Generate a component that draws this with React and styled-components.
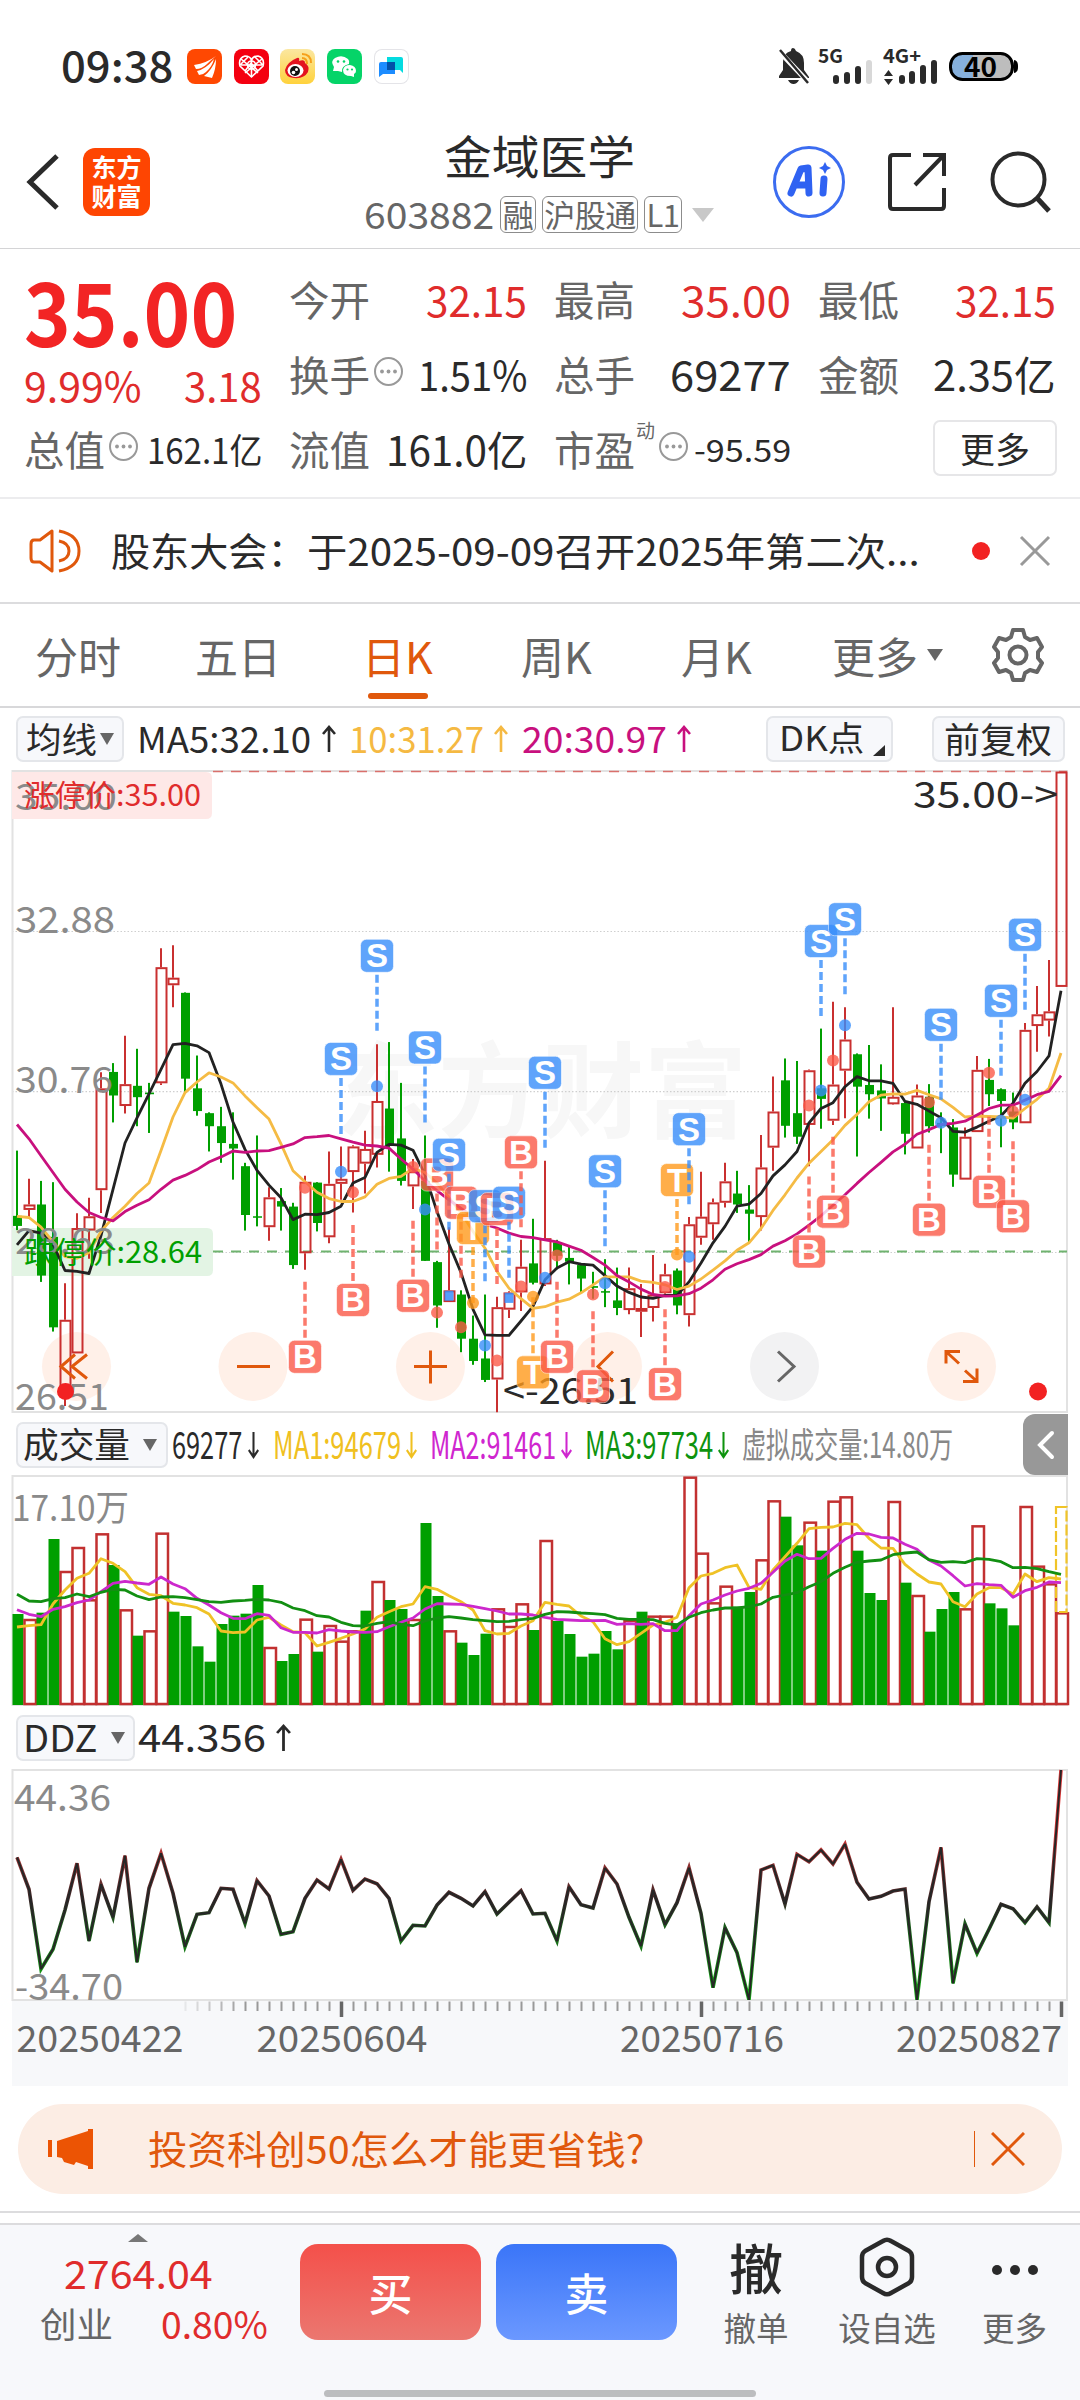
import React, { useLayoutEffect, useRef, useState } from "react";
import styled, { createGlobalStyle, css } from "styled-components";

const RED = "#e02c2c";
const GREEN = "#009f00";
const ORANGE = "#e0580c";
const DARK = "#2a2a2a";
const GREY = "#666";
const FONT = '"Noto Sans CJK SC", "Noto Sans", sans-serif';

const GlobalStyle = createGlobalStyle`
   * {
      box-sizing: border-box;
   }
   body {
      margin: 0;
      background: #fff;
      color: ${DARK};
      font-family: ${FONT};
   }
   svg {
      display: block;
      flex: none;
   }
`;

/* ---------- data ---------- */

// direction, high, body top, body bottom, low (axis units, AXIS_TOP..AXIS_BOTTOM)
const AXIS_TOP = 27;
const AXIS_BOTTOM = 1548;
const candles = `
g 928 1083 1107 1117|r 995 1056 1069 1090|g 1000 1056 1225 1240|g 1003 1133 1348 1358|r 1243 1330 1500 1535
r 1077 1112 1410 1410|r 1040 1084 1118 1185|r 742 780 1022 1076|g 720 741 797 861|r 655 770 822 840
g 686 774 801 870|g 767 790 794 886|r 447 492 768 772|r 440 517 535 587|g 552 553 757 790
g 702 780 834 845|g 837 839 870 930|g 824 870 910 957|g 837 912 923 997|g 957 965 1081 1118
g 892 1084 1087 1108|r 1015 1039 1110 1142|g 1017 1048 1061 1118|g 1052 1061 1200 1209|r 988 1002 1172 1211
g 1003 1004 1100 1120|r 930 1007 1134 1148|r 918 995 1007 1045|r 915 918 979 1075|r 881 924 959 1030
r 675 810 938 968|g 670 828 915 978|g 767 899 1000 1011|r 948 977 1013 1067|g 892 1000 1190 1190
g 1190 1193 1296 1349|r 1110 1260 1288 1288|g 1260 1270 1375 1407|g 1320 1375 1428 1437|g 1270 1422 1473 1478
r 1275 1300 1472 1550|r 1262 1265 1306 1326|r 1140 1204 1265 1309|g 1090 1196 1242 1246|r 952 1136 1246 1250
g 1140 1146 1178 1210|g 1155 1183 1192 1246|g 1195 1200 1232 1264|g 1216 1250 1254 1280|g 1186 1262 1264 1300
g 1206 1284 1302 1319|r 1206 1255 1307 1317|r 1245 1302 1311 1371|r 1176 1270 1302 1334|r 1197 1222 1267 1270
g 1208 1213 1296 1317|r 1086 1103 1319 1346|r 978 1085 1135 1152|r 1042 1051 1103 1140|r 957 1001 1052 1063
g 976 1030 1056 1076|g 1010 1068 1078 1150|r 891 968 1086 1118|r 752 835 921 976|g 709 761 869 897
g 715 839 895 912|r 735 737 867 965|g 638 780 805 876|r 574 771 857 867|r 587 664 738 851
g 697 699 776 942|g 677 772 794 852|g 723 785 804 881|r 587 800 818 819|g 812 815 888 937
r 771 797 923 923|g 770 800 870 885|g 837 862 870 934|g 853 873 985 1014|r 873 895 997 997
r 703 736 884 884|g 710 760 794 822|g 780 782 810 920|g 790 835 861 877|r 625 641 863 863
r 537 604 632 693|r 475 597 619 657|r 27 27 539 539`
   .trim()
   .split(/[|\n]/)
   .map((row) => {
      const [dir, ...v] = row.split(" ");
      return [dir, ...v.map(Number)];
   });

const ma5 = [1152,1118,1124,1150,1213,1215,1220,1130,1020,910,850,793,735,676,673,679,695,770,860,925,975,1010,1040,1092,1079,1080,1075,1060,1005,992,932,913,915,927,985,1073,1150,1218,1305,1366,1367,1367,1333,1298,1235,1207,1192,1198,1200,1225,1250,1265,1276,1279,1272,1272,1240,1195,1147,1108,1060,1055,1030,988,962,930,862,828,814,776,752,762,762,768,811,818,834,850,882,884,872,858,845,815,768,740,703,548];
const ma10 = [1084,1087,1110,1145,1180,1184,1170,1120,1087,1060,1030,1005,928,848,790,765,743,753,767,798,826,853,912,976,1002,1027,1042,1049,1049,1038,1008,994,989,970,980,1005,1040,1075,1120,1160,1215,1255,1280,1303,1299,1288,1281,1266,1247,1228,1228,1228,1238,1241,1247,1258,1250,1233,1212,1190,1165,1147,1113,1070,1033,993,958,930,902,868,842,812,796,793,794,785,795,805,825,848,846,847,848,851,828,806,780,696];
const ma20 = [866,900,940,980,1020,1050,1075,1087,1095,1073,1058,1045,1020,998,987,973,955,943,929,932,929,928,920,912,897,895,892,900,908,915,917,922,948,972,1000,1023,1045,1065,1085,1103,1112,1124,1132,1135,1140,1145,1155,1165,1182,1200,1225,1240,1257,1270,1274,1273,1268,1255,1235,1210,1197,1187,1175,1155,1142,1126,1105,1083,1058,1033,1006,980,956,931,913,889,878,866,863,858,843,828,820,820,808,795,787,750];

// letter, day, level, side the dashed leader leaves from
const flags = [
   ["S", 27, 710, 1], ["S", 30, 465, 1], ["S", 34, 683, 1], ["B", 35, 985, 1], ["S", 36, 938, 1],
   ["B", 24, 1418, -1], ["B", 28, 1283, -1], ["B", 33, 1273, -1], ["B", 37, 1052, 1], ["T", 38, 1112, 1],
   ["S", 39, 1060, 1], ["B", 40, 1067, 1], ["S", 41, 1052, 1], ["B", 42, 932, 1], ["T", 43, 1455, -1],
   ["S", 44, 743, 1], ["B", 45, 1418, -1], ["B", 48, 1488, -1], ["S", 49, 977, 1], ["B", 54, 1483, -1],
   ["T", 55, 998, 1], ["S", 56, 877, 1], ["B", 66, 1168, -1], ["B", 68, 1073, -1], ["S", 67, 430, 1],
   ["S", 69, 378, 1], ["B", 76, 1092, -1], ["S", 77, 629, 1], ["B", 81, 1026, -1], ["S", 82, 572, 1],
   ["B", 83, 1084, -1], ["S", 84, 415, 1],
];
const flagColor = { S: "#388efb", B: "#fb5a48", T: "#ff9a1c" };

const dots = [
   ["B", 24, 1016], ["S", 27, 978], ["B", 28, 1027], ["S", 30, 775], ["B", 33, 967], ["S", 34, 1068],
   ["B", 35, 1313], ["S", 36, 1273, true], ["B", 37, 1348], ["T", 38, 1290], ["S", 39, 1391], ["B", 40, 1427],
   ["S", 41, 1278, true], ["B", 42, 1251], ["T", 43, 1275], ["S", 44, 1230], ["B", 45, 1177], ["B", 48, 1270],
   ["S", 49, 1243], ["B", 54, 1252], ["T", 55, 1175], ["S", 56, 1180], ["B", 66, 821], ["S", 67, 785],
   ["B", 68, 714], ["S", 69, 630], ["B", 76, 813], ["S", 77, 862], ["B", 81, 743], ["S", 82, 857],
   ["B", 83, 835], ["S", 84, 807],
];

const volumes = "g612 r627 g608 g387 r483 r411 r568 r370 g465 r598 g677 r661 r368 g605 g618 g709 g755 g642 g617 g611 g525 r711 g753 g732 r626 g725 r645 r692 r661 g602 r513 g570 g597 r627 g339 g558 r661 g698 g735 g671 r595 r648 r580 g660 r390 g633 g672 g740 g731 g663 g718 r630 g605 r617 r617 g640 r200 r428 r577 r527 g590 g546 r448 r271 g320 g406 r335 g422 r272 r259 g422 g549 g570 r273 g518 r555 g665 g597 g546 r595 r346 g580 g595 g646 r288 r467 r520 r607".split(" ");
const vma1 = [651,647,644,582,540,505,490,446,460,485,533,553,557,580,585,593,612,663,668,666,630,622,645,665,668,708,697,685,672,657,622,605,590,582,530,538,557,575,600,662,672,670,648,632,577,583,588,618,635,686,704,695,670,645,637,622,533,498,490,473,465,532,538,480,440,400,356,352,351,340,344,385,414,415,463,492,516,522,575,590,552,533,533,552,492,515,503,507];
const vma2 = [599,613,620,598,590,578,570,545,520,514,519,523,501,522,536,565,585,608,625,626,611,616,653,667,667,669,659,663,666,667,665,650,637,624,597,581,582,583,589,596,603,612,612,615,622,628,630,632,632,631,643,641,643,641,662,662,617,582,570,555,543,535,520,487,453,433,446,445,415,388,370,372,382,384,403,418,450,468,497,528,521,524,526,562,542,532,516,518];
const vma3 = [553,573,575,566,563,552,560,547,538,540,558,569,561,560,563,569,575,577,573,571,568,570,577,594,602,617,621,637,647,648,640,635,643,647,633,624,620,624,629,632,635,634,629,625,613,605,606,609,611,614,625,628,628,629,640,645,622,608,600,594,594,590,582,562,555,548,530,515,490,472,457,453,450,434,429,426,449,457,455,458,446,448,455,473,472,476,485,493];

const ddz = [292,388,627,568,450,310,543,373,472,287,607,385,280,400,560,463,458,385,388,490,362,408,523,515,415,360,387,298,391,357,371,415,543,496,498,435,397,415,438,395,462,427,392,462,460,543,380,434,444,324,372,472,558,390,494,428,323,460,683,503,578,720,330,316,432,283,305,270,312,252,367,417,409,393,387,720,425,262,670,492,580,508,433,446,488,441,488,30];

const dayX = (i) => 17 + i * 12;
const priceY = (v) => 1.5 + ((v - AXIS_TOP) * 640) / (AXIS_BOTTOM - AXIS_TOP);
const volumeY = (v) => (v - 198) / 3 + 1;
const ddzY = (v) => (v - 30) / 3 + 1;
const toPoints = (values, y) => values.map((v, i) => `${dayX(i)},${y(v).toFixed(1)}`).join(" ");

/* ---------- shared pieces ---------- */

const FitBox = styled.span`
   display: inline-block;
   flex: none;
   white-space: nowrap;
   padding-bottom: 3px;
   font-size: ${(p) => p.$size}px;
   line-height: ${(p) => p.$size * 1.2}px;
   font-weight: ${(p) => p.$weight || 400};
   color: ${(p) => p.$color || "inherit"};
   margin-left: ${(p) => p.$gap || 0}px;
`;

const FitInner = styled.span`
   display: inline-block;
   transform-origin: left center;
`;

// one line of text squeezed or stretched to a fixed width
const Fit = ({ w, size, weight, color, gap, children }) => {
   const ref = useRef(null);
   const [scale, setScale] = useState(1);

   useLayoutEffect(() => {
      setScale(w / ref.current.offsetWidth);
   }, [w, children]);

   return (
      <FitBox $size={size} $weight={weight} $color={color} $gap={gap} style={{ width: w }}>
         <FitInner ref={ref} style={{ transform: `scaleX(${scale})` }}>
            {children}
         </FitInner>
      </FitBox>
   );
};

const Caret = styled.i`
   flex: none;
   width: 0;
   height: 0;
   margin-left: ${(p) => p.$gap || 0}px;
   border-left: ${(p) => p.$w / 2}px solid transparent;
   border-right: ${(p) => p.$w / 2}px solid transparent;
   ${(p) =>
      p.$up
         ? css`border-bottom: ${p.$h}px solid ${p.$color || GREY};`
         : css`border-top: ${p.$h}px solid ${p.$color || GREY};`}
`;

const Page = styled.div`
   width: 1080px;
   height: 2400px;
   display: flex;
   flex-direction: column;
   overflow: hidden;
   background: #fff;
`;

/* ---------- status bar ---------- */

const StatusRow = styled.div`
   height: 116px;
   padding: 16px 61px 0 61px;
   display: flex;
   align-items: center;
   justify-content: space-between;
`;

const StatusGroup = styled.div`
   display: flex;
   align-items: center;
`;

const AppIcons = styled.div`
   display: flex;
   gap: 11.7px;
   margin-left: 14px;
`;

const AppIcon = styled.div`
   width: 35px;
   height: 35px;
   border-radius: 8px;
   background: ${(p) => p.$bg};
   box-shadow: ${(p) => (p.$line ? "inset 0 0 0 1px #e4e4e8" : "none")};
`;

const StatusBar = () => (
   <StatusRow>
      <StatusGroup>
         <Fit w={112} size={42} weight={500}>09:38</Fit>
         <AppIcons>
            <AppIcon $bg="#ff4802">
               <svg width="35" height="35" viewBox="0 0 35 35" fill="#fff">
                  <path d="M7 16 Q20 14 29 7 Q24 11 20 15 Q15 20 9 20Z" />
                  <path d="M10 22 Q19 20 27 10 Q25 18 19 23 Q16 26 12 26Z" />
                  <path d="M17 27 Q25 21 29 10 Q29 20 25 29Z" />
               </svg>
            </AppIcon>
            <AppIcon $bg="#f40010">
               <svg width="35" height="35" viewBox="0 0 35 35" fill="none" stroke="#fff" strokeWidth="1.6">
                  <path d="M17.5 28 L6 17 Q4 9 11 7 Q16 7 17.5 11 Q19 7 24 7 Q31 9 29 17Z" />
                  <path d="M7 10 L24 24 M28 10 L11 24 M6 16 L14 8 M29 16 L21 8 M11 22 L17 14 L24 22 M17.5 10 V28 M7 16 H28" />
                  <circle cx="17.5" cy="16" r="4" />
               </svg>
            </AppIcon>
            <AppIcon $bg="linear-gradient(#fbe7a0, #ffd23c)">
               <svg width="35" height="35" viewBox="0 0 35 35">
                  <path d="M17 9 Q20 8 19 12 Q25 10 25 14 Q30 17 28 23 Q24 30 14 29 Q5 28 5 21 Q7 13 17 9Z" fill="#e3131f" />
                  <ellipse cx="15.500" cy="21.500" rx="8" ry="6.500" fill="#fff" />
                  <circle cx="15" cy="22" r="5" fill="#111" />
                  <circle cx="16.500" cy="20.500" r="1.500" fill="#fff" />
                  <circle cx="13.500" cy="23.500" r="1.800" fill="#fff" />
                  <path d="M22 9 Q27 9 27 15 M22 5 Q31 5 31 14" fill="none" stroke="#f6a01a" strokeWidth="2" />
               </svg>
            </AppIcon>
            <AppIcon $bg="#05d468">
               <svg width="35" height="35" viewBox="0 0 35 35">
                  <path d="M6 22 L7 18 Q3 12 8 9 Q15 5 21 10 Q23 12 22 15 Q14 17 15 23 L11 22Z" fill="#fff" />
                  <path d="M16 21 Q17 16 23 16 Q29 17 29 22 Q29 24 27 25 L27 28 L24 27 Q16 27 16 21Z" fill="#fff" />
                  <g fill="#05d468">
                     <circle cx="11" cy="12.500" r="1.300" />
                     <circle cx="17" cy="12.500" r="1.300" />
                     <circle cx="20.500" cy="20.500" r="1.100" />
                     <circle cx="25" cy="20.500" r="1.100" />
                  </g>
               </svg>
            </AppIcon>
            <AppIcon $bg="#fff" $line>
               <svg width="35" height="35" viewBox="0 0 35 35">
                  <path d="M13 8 H27 Q29 8 29 10 V24 L26 21 H13Z" fill="#04dbe0" />
                  <path d="M7 13 H21 V25 H9 L5 28 V15 Q5 13 7 13Z" fill="#1c8cff" />
                  <path d="M13 13 H21 V21 H13Z" fill="#0251a8" />
               </svg>
            </AppIcon>
         </AppIcons>
      </StatusGroup>
      <svg width="242" height="44" viewBox="777 45 242 44" fill={DARK}>
         <path d="M793 49 Q795 49 796 52 Q804 55 804 64 V71 L809 78 V79 H779 V77 L783 71 V63 Q783 54 791 52 Q791 49 793 49Z M788 81 H799 Q797 85 793.500 85 Q790 85 788 81Z" />
         <path d="M777 50 L811 86" stroke="#fff" strokeWidth="5" />
         <path d="M780 51 L808 84" stroke={DARK} strokeWidth="2.500" />
         <text x="818" y="63.500" fontSize="19" fontWeight="700" textLength="25" lengthAdjust="spacingAndGlyphs">5G</text>
         <text x="883" y="63.500" fontSize="19" fontWeight="700" textLength="38" lengthAdjust="spacingAndGlyphs">4G+</text>
         <g strokeWidth="6" strokeLinecap="round" stroke={DARK}>
            <path d="M836 79 V82 M847 76 V82 M858 70 V82" />
            <path d="M869 64 V82" stroke="#d8d8d8" />
            <path d="M902 79 V82 M912 75 V82 M923 69 V82 M934 64 V82" />
         </g>
         <path d="M888.500 71 L893 77 H884Z M888.500 86 L893 80 H884Z" />
         <rect x="950.500" y="54.500" width="62" height="26" rx="12" fill="#bdbdbd" />
         <path d="M973 54.500 H963 Q950.500 55 950.500 67.500 Q950.500 80 963 80.500 H973Z" fill="#86b0dc" />
         <rect x="950.500" y="54.500" width="62" height="26" rx="12" fill="none" stroke="#000" strokeWidth="3" />
         <path d="M1014 61 Q1018 61 1018 67.500 Q1018 74 1014 74Z" fill="#000" />
         <text x="964" y="78" fontSize="27" fontWeight="700" fill="#000" textLength="33" lengthAdjust="spacingAndGlyphs">40</text>
      </svg>
   </StatusRow>
);

/* ---------- header ---------- */

const HeaderRow = styled.header`
   height: 133px;
   padding: 0 29px 0 26px;
   display: flex;
   align-items: center;
   border-bottom: 1px solid #d4d4d6;
`;

const Logo = styled.div`
   width: 67px;
   height: 68px;
   margin-left: 24px;
   border-radius: 12px;
   background: #fe4502;
   color: #fff;
   font-size: 25px;
   font-weight: 700;
   line-height: 29px;
   text-align: center;
   padding-top: 4px;
`;

const TitleBlock = styled.div`
   width: 354px;
   margin-left: 212px;
   padding-top: 3px;
   display: flex;
   flex-direction: column;
   align-items: center;
`;

const CodeRow = styled.div`
   height: 50px;
   margin-top: 4px;
   display: flex;
   align-items: center;
   color: ${GREY};
`;

const Tag = styled.span`
   height: 37px;
   display: flex;
   align-items: center;
   justify-content: center;
   width: ${(p) => p.$w}px;
   margin-left: 6px;
   border: 1.5px solid #8c8c8c;
   border-radius: 6px;
   font-size: 31px;
   line-height: 33px;
   padding-bottom: 2px;
   letter-spacing: -0.5px;
`;

const HeaderIcons = styled.div`
   display: flex;
   align-items: center;
   margin-left: auto;
`;

const Header = () => (
   <HeaderRow>
      <svg width="33" height="56" viewBox="0 0 33 56" fill="none" stroke={DARK} strokeWidth="5">
         <path d="M31 2 L4 28 L31 54" />
      </svg>
      <Logo>
         东方
         <br />
         财富
      </Logo>
      <TitleBlock>
         <Fit w={191} size={46}>金域医学</Fit>
         <CodeRow>
            <Fit w={130} size={37}>603882</Fit>
            <Tag $w={36}>融</Tag>
            <Tag $w={96}>沪股通</Tag>
            <Tag $w={38}>L1</Tag>
            <Caret $w={22} $h={14} $gap={10} $color="#c8c8c8" />
         </CodeRow>
      </TitleBlock>
      <HeaderIcons>
         <svg width="72" height="72" viewBox="0 0 72 72">
            <circle cx="36" cy="36" r="34.500" fill="none" stroke="#3b6cf0" strokeWidth="3" />
            <g fill="none" stroke="#2f62f2" strokeWidth="7" strokeLinejoin="round" strokeLinecap="round">
               <path d="M18 47 L28 23 L35 22 L36 47 M25 39 H35" />
               <path d="M51 33 L50 47" />
            </g>
            <path d="M52 16 L54 20 L58 22 L54 24 L52 28 L50 24 L46 22 L50 20Z" fill="#2f62f2" />
         </svg>
         <svg width="60" height="60" viewBox="0 0 60 60" fill="none" stroke={DARK} strokeWidth="4" style={{ marginLeft: 42 }}>
            <path d="M24 3 H6 Q3 3 3 6 V54 Q3 57 6 57 H54 Q57 57 57 54 V36" />
            <path d="M36 3 H57 V24 M56 4 L28 33" />
         </svg>
         <svg width="62" height="62" viewBox="0 0 62 62" fill="none" stroke={DARK} strokeWidth="4" style={{ marginLeft: 42 }}>
            <circle cx="29.500" cy="28.500" r="26" />
            <path d="M48 47 L60 60" strokeWidth="5" />
         </svg>
      </HeaderIcons>
   </HeaderRow>
);

/* ---------- quote ---------- */

const QuoteGrid = styled.section`
   height: 250px;
   padding: 14px 24px 9px 24px;
   display: grid;
   grid-template-columns: 238px 238px 237px 238px;
   grid-template-rows: 75px 75px 75px;
   column-gap: 27px;
   border-bottom: 2px solid #ececee;
`;

const Cell = styled.div`
   display: flex;
   align-items: center;
   justify-content: space-between;
   color: ${DARK};
`;

const Label = styled.span`
   display: flex;
   align-items: center;
   color: ${GREY};
   font-size: 40.5px;
   line-height: 48px;
   padding-bottom: 3px;
   sup {
      align-self: flex-start;
      height: 24px;
      font-size: 19px;
      line-height: 20px;
      margin-top: -5px;
      margin-left: 1px;
   }
`;

const PriceCell = styled.div`
   grid-row: span 2;
   display: flex;
   flex-direction: column;
   margin-top: -7px;
   color: ${RED};
`;

const Change = styled.div`
   display: flex;
   justify-content: space-between;
   align-items: center;
   height: 44px;
   margin-top: -1px;
`;

const MoreButton = styled.button`
   width: 124px;
   height: 56px;
   margin: 0 -1px 6px auto;
   border: 2px solid #e6e6e8;
   border-radius: 7px;
   background: #fff;
   color: ${DARK};
   font: 35px/48px ${FONT};
   padding: 0;
`;

const InfoDot = ({ gap = 3 }) => (
   <svg width="31" height="31" viewBox="0 0 31 31" style={{ marginLeft: gap, marginTop: -5 }}>
      <circle cx="15.500" cy="15.500" r="13.500" fill="none" stroke="#999" strokeWidth="2" />
      <g fill="#999">
         <circle cx="9" cy="15.500" r="1.900" />
         <circle cx="15.500" cy="15.500" r="1.900" />
         <circle cx="22" cy="15.500" r="1.900" />
      </g>
   </svg>
);

const Quote = () => (
   <QuoteGrid>
      <PriceCell>
         <Fit w={213} size={88} weight={700} color="#f22424">35.00</Fit>
         <Change>
            <Fit w={117} size={41}>9.99%</Fit>
            <Fit w={78} size={41}>3.18</Fit>
         </Change>
      </PriceCell>
      <Cell><Label>今开</Label><Fit w={101} size={42} color={RED}>32.15</Fit></Cell>
      <Cell><Label>最高</Label><Fit w={110} size={42} color={RED}>35.00</Fit></Cell>
      <Cell><Label>最低</Label><Fit w={101} size={42} color={RED}>32.15</Fit></Cell>
      <Cell><Label>换手<InfoDot /></Label><Fit w={109} size={41}>1.51%</Fit></Cell>
      <Cell><Label>总手</Label><Fit w={121} size={41}>69277</Fit></Cell>
      <Cell><Label>金额</Label><Fit w={123} size={41}>2.35亿</Fit></Cell>
      <Cell><Label>总值<InfoDot /></Label><Fit w={115} size={35}>162.1亿</Fit></Cell>
      <Cell><Label>流值</Label><Fit w={141} size={41}>161.0亿</Fit></Cell>
      <Cell><Label>市盈<sup>动</sup><InfoDot /></Label><Fit w={97} size={31}>-95.59</Fit></Cell>
      <Cell><MoreButton>更多</MoreButton></Cell>
   </QuoteGrid>
);

/* ---------- notice ---------- */

const NoticeRow = styled.div`
   height: 105px;
   padding: 0 28px;
   display: flex;
   align-items: center;
   border-bottom: 2px solid #dcdcde;
`;

const RedDot = styled.i`
   width: 18px;
   height: 18px;
   margin-left: 52px;
   border-radius: 50%;
   background: #f22222;
`;

const Notice = () => (
   <NoticeRow>
      <svg width="54" height="46" viewBox="0 0 54 46" fill="none" stroke={ORANGE} strokeWidth="3">
         <path d="M24 3 L12 12 H6 Q3 12 3 16 V30 Q3 34 6 34 H12 L24 43Z" strokeLinejoin="round" />
         <path d="M31 13 Q41 15 41 23 Q41 31 31 33 M31 3 Q51 7 51 23 Q51 39 31 43" />
      </svg>
      <Fit w={196} size={38.5} gap={29}>股东大会：</Fit>
      <Fit w={613} size={38.5}>于2025-09-09召开2025年第二次...</Fit>
      <RedDot />
      <svg width="32" height="32" viewBox="0 0 32 32" stroke="#999" strokeWidth="3" style={{ marginLeft: 29 }}>
         <path d="M2 2 L30 30 M30 2 L2 30" />
      </svg>
   </NoticeRow>
);

/* ---------- period tabs ---------- */

const TabRow = styled.nav`
   height: 104px;
   padding-left: 35px;
   display: flex;
   align-items: stretch;
   border-bottom: 2px solid #d8d8da;
`;

const Tab = styled.span`
   width: ${(p) => p.$w}px;
   display: flex;
   flex-direction: column;
   align-items: flex-start;
   justify-content: space-between;
   color: ${(p) => (p.$active ? ORANGE : GREY)};
   font-size: 43px;
   line-height: 54px;
   padding: 24px 0 7px;

   &::after {
      content: "";
      width: 60px;
      height: 6px;
      margin-left: 6px;
      border-radius: 3px;
      background: ${(p) => (p.$active ? ORANGE : "transparent")};
   }
`;

const TabLine = styled.span`
   display: flex;
   align-items: center;
`;

const Tabs = () => (
   <TabRow>
      <Tab $w={160}>分时</Tab>
      <Tab $w={167}>五日</Tab>
      <Tab $w={159} $active>日K</Tab>
      <Tab $w={160}>周K</Tab>
      <Tab $w={151}>月K</Tab>
      <Tab $w={158}><TabLine>更多<Caret $w={16} $h={12} $gap={9} /></TabLine></Tab>
      <svg width="56" height="56" viewBox="0 0 56 56" fill="none" stroke={GREY} strokeWidth="4" strokeLinejoin="round" style={{ marginTop: 23 }}>
         <path d="M23 3 H33 L35 10 L40 13 L47 11 L52 20 L48 25 V31 L52 36 L47 45 L40 43 L35 46 L33 53 H23 L21 46 L16 43 L9 45 L4 36 L8 31 V25 L4 20 L9 11 L16 13 L21 10Z" />
         <circle cx="28" cy="28" r="8.500" />
      </svg>
   </TabRow>
);

/* ---------- indicator rows ---------- */

const IndicatorRow = styled.div`
   height: ${(p) => p.$h}px;
   padding: 0 ${(p) => p.$right || 0}px 0 16px;
   display: flex;
   align-items: center;
   flex: none;
`;

const Pill = styled.span`
   width: ${(p) => p.$w}px;
   height: 46px;
   flex: none;
   display: flex;
   align-items: center;
   padding-left: ${(p) => p.$pad || 5}px;
   margin-left: ${(p) => p.$gap || 0}px;
   border: 2px solid #e4e6ea;
   border-radius: 7px;
   background: #f7f8fb;
`;

const Corner = styled.i`
   align-self: flex-end;
   margin: 0 0 4px 9px;
   border-left: 12px solid transparent;
   border-bottom: 11px solid ${DARK};
`;

const Drawer = styled.span`
   width: 45px;
   height: 61px;
   margin-left: auto;
   display: flex;
   align-items: center;
   justify-content: center;
   border-radius: 12px 0 0 12px;
   background: #989898;
`;

const Arrow = ({ up, gap, color = DARK, w = 14 }) => (
   <svg width={w} height="28" viewBox="0 0 14 28" preserveAspectRatio="none" fill="none" stroke={color} strokeWidth="2.600" style={{ marginLeft: gap }}>
      <path d={up ? "M7 27 V2 M1 9 L7 2 L13 9" : "M7 1 V26 M1 19 L7 26 L13 19"} />
   </svg>
);

const AverageRow = () => (
   <IndicatorRow $h={62}>
      <Pill $w={108} $pad={8}><Fit w={71} size={35}>均线</Fit><Caret $w={14} $h={12} $gap={3} /></Pill>
      <Fit w={174} size={36} gap={13}>MA5:32.10</Fit>
      <Arrow up gap={11} />
      <Fit w={135} size={36} gap={13} color="#f5b942">10:31.27</Fit>
      <Arrow up gap={10} color="#f5b942" />
      <Fit w={145} size={36} gap={14} color="#c8107e">20:30.97</Fit>
      <Arrow up gap={10} color="#c8107e" />
      <Pill $w={127} $pad={11} $gap={75}><Fit w={85} size={34}>DK点</Fit><Corner /></Pill>
      <Pill $w={133} $pad={10} $gap={39}><Fit w={108} size={35}>前复权</Fit></Pill>
   </IndicatorRow>
);

const VolumeRow = () => (
   <IndicatorRow $h={61} $right={12}>
      <Pill $w={152}><Fit w={107} size={35}>成交量</Fit><Caret $w={15} $h={12} $gap={13} /></Pill>
      <Fit w={70} size={38} gap={4}>69277</Fit>
      <Arrow gap={6} w={11} />
      <Fit w={128} size={38} gap={14} color="#f0c020">MA1:94679</Fit>
      <Arrow gap={5} w={11} color="#f0c020" />
      <Fit w={126} size={38} gap={13} color="#cf26cf">MA2:91461</Fit>
      <Arrow gap={5} w={11} color="#cf26cf" />
      <Fit w={128} size={38} gap={13} color="#0e930e">MA3:97734</Fit>
      <Arrow gap={5} w={11} color="#0e930e" />
      <Fit w={211} size={35} gap={13} color="#888">虚拟成交量:14.80万</Fit>
      <Drawer>
         <svg width="18" height="30" viewBox="0 0 18 30" fill="none" stroke="#fff" strokeWidth="4" strokeLinecap="round">
            <path d="M15 3 L3 15 L15 27" />
         </svg>
      </Drawer>
   </IndicatorRow>
);

const DdzRow = () => (
   <IndicatorRow $h={63}>
      <Pill $w={119}><Fit w={74} size={37}>DDZ</Fit><Caret $w={15} $h={12} $gap={14} /></Pill>
      <Fit w={128} size={38} gap={3}>44.356</Fit>
      <Arrow up gap={10} w={15} />
   </IndicatorRow>
);

/* ---------- charts ---------- */

const Frame = ({ h }) => <rect x="12.5" y="1" width="1054.500" height={h} fill="none" stroke="#e2e2e2" strokeWidth="2" />;

const ChartText = ({ x, y, w, size = 37, color = "#8a8a8a", weight, children }) => (
   <text x={x} y={y} fontSize={size} fill={color} fontWeight={weight} textLength={w} lengthAdjust="spacingAndGlyphs">
      {children}
   </text>
);

const Candle = ({ i, data: [dir, high, top, bottom, low] }) => {
   const x = dayX(i);
   const y1 = priceY(top);
   const h = Math.max(priceY(bottom) - y1, 1.5);
   if (dir === "g") {
      return (
         <g fill={GREEN}>
            <rect x={x - 1} y={priceY(high)} width="2" height={priceY(low) - priceY(high)} />
            <rect x={x - 4} y={y1} width="9" height={h} />
         </g>
      );
   }
   return (
      <g stroke="#c93030" strokeWidth="2" fill="none">
         <path d={`M${x} ${priceY(high)} V${y1} M${x} ${priceY(bottom)} V${priceY(low)}`} />
         <rect x={x - 4.5} y={y1 + 1} width="10" height={Math.max(h - 2, 1)} />
      </g>
   );
};

const Flag = ({ data: [letter, i, level, side] }) => {
   const x = dayX(i);
   const y = priceY(level);
   const color = flagColor[letter];
   return (
      <g opacity="0.8">
         <path d={`M${x} ${y + side * 19} V${y + side * 76}`} stroke={color} strokeWidth="3.500" strokeDasharray="8 4" />
         <rect x={x - 16.5} y={y - 16.5} width="33" height="33" rx="6" fill={color} stroke="#fff" strokeOpacity="0.6" />
         <text x={x} y={y + 11.5} fontSize="33" fontFamily="Liberation Sans, sans-serif" fontWeight="700" fill="#fff" textAnchor="middle">
            {letter}
         </text>
      </g>
   );
};

const tools = [
   [76.5, "M75 -12 L61 0 L75 12 M87 -12 L72 0 L87 12"],
   [253, "M237 0 H270"],
   [430.5, "M414 0 H447 M430.500 -16 V17"],
   [607.5, "M613 -15 L598 0 L613 15"],
   [784.5, "M778 -15 L794 0 L778 15"],
   [961.5, "M946 -3 V-15 H960 M946 -15 L959 -3 M977 2 V15 H963 M977 15 L965 4"],
];

const PriceChart = () => (
   <svg width="1080" height="644" viewBox="0 0 1080 644">
      <ChartText x={335} y={360} w={412} size={104} weight={700} color="#f7f7f7">东方财富</ChartText>
      <g stroke="#cfcfcf" strokeWidth="1.200" strokeDasharray="1.500 2">
         <path d="M12 161.500 H1067 M12 321.700 H1067 M12 482.500 H1067" />
      </g>
      <Frame h={641} />
      <path d="M213 1.500 H1067" stroke="#d9706c" strokeWidth="1.500" strokeDasharray="10 8" />
      <path d="M213 481.500 H1067" stroke="#6fb36f" strokeWidth="1.800" strokeDasharray="10 8" />
      <path d="M12 2 H206 Q212 2 212 8 V43 Q212 49 206 49 H12Z" fill="#fee8e7" />
      <path d="M12 458 H207 Q213 458 213 464 V500 Q213 506 207 506 H12Z" fill="#e3f4e4" />
      {tools.map(([cx]) => (
         <circle key={cx} cx={cx} cy="596.500" r="34.500" fill={cx === 784.5 ? "#f2f2f3" : "#fff0e8"} />
      ))}
      {candles.map((c, i) => (
         <Candle key={i} i={i} data={c} />
      ))}
      <g fill="none" strokeWidth="2.800" strokeLinejoin="round">
         <polyline points={toPoints(ma5, priceY)} stroke="#222" />
         <polyline points={toPoints(ma10, priceY)} stroke="#f5bb44" />
         <polyline points={toPoints(ma20, priceY)} stroke="#c8107e" />
      </g>
      <ChartText x={15} y={39.500} w={102}>35.00</ChartText>
      <ChartText x={15} y={162.500} w={100}>32.88</ChartText>
      <ChartText x={15} y={323} w={98}>30.76</ChartText>
      <ChartText x={15} y={483.500} w={100}>28.63</ChartText>
      <ChartText x={15} y={640} w={94}>26.51</ChartText>
      <ChartText x={24} y={36} w={177} size={30} color={RED}>涨停价:35.00</ChartText>
      <ChartText x={24} y={493} w={178} size={30} color={GREEN}>跌停价:28.64</ChartText>
      <ChartText x={913} y={38} w={145} color={DARK}>35.00-&gt;</ChartText>
      <ChartText x={503} y={634} w={135} color={DARK}>&lt;-26.51</ChartText>
      {tools.map(([cx, d]) => (
         <path key={cx} d={d} transform="translate(0 596.500)" fill="none" stroke={cx === 784.5 ? GREY : ORANGE} strokeWidth="3" />
      ))}
      {dots.map(([k, i, level, square]) =>
         square ? (
            <rect key={i} x={dayX(i) - 4.5} y={priceY(level) - 5} width="9" height="10" fill={flagColor[k]} opacity="0.85" />
         ) : (
            <circle key={i} cx={dayX(i)} cy={priceY(level)} r="6" fill={flagColor[k]} opacity="0.8" />
         )
      )}
      {flags.map((f) => (
         <Flag key={f[1]} data={f} />
      ))}
      <circle cx="65.500" cy="621.500" r="8.500" fill="#f22222" />
      <circle cx="1038" cy="621.500" r="9" fill="#f22222" />
   </svg>
);

const VolumeChart = () => (
   <svg width="1080" height="231" viewBox="0 0 1080 231">
      <Frame h={229} />
      {volumes.map((v, i) => {
         const y = volumeY(Number(v.slice(1)));
         const x = dayX(i) - 4.5;
         return v[0] === "g" ? (
            <rect key={i} x={x} y={y} width="11" height={230 - y} fill={GREEN} />
         ) : (
            <rect key={i} x={x} y={y + 1} width="11.5" height={228 - y} fill="#fff" stroke="#c23030" strokeWidth="2.500" />
         );
      })}
      <rect x="1056" y="32" width="10.500" height="105" fill="none" stroke="#f0c428" strokeWidth="2.200" strokeDasharray="11 3" />
      <g fill="none" strokeWidth="2.800" strokeLinejoin="round">
         <polyline points={toPoints(vma1, volumeY)} stroke="#efc226" />
         <polyline points={toPoints(vma2, volumeY)} stroke="#cc28cc" />
         <polyline points={toPoints(vma3, volumeY)} stroke="#128f12" />
      </g>
      <ChartText x={12} y={46} w={117} size={36}>17.10万</ChartText>
   </svg>
);

const DdzChart = () => (
   <svg width="1080" height="232" viewBox="0 0 1080 232">
      <defs>
         <linearGradient id="heat" gradientUnits="userSpaceOnUse" x1="0" y1="60" x2="0" y2="231">
            <stop offset="0" stopColor="#e03838" />
            <stop offset="0.42" stopColor="#3a2828" />
            <stop offset="0.55" stopColor="#1c5a1c" />
            <stop offset="1" stopColor="#11b011" />
         </linearGradient>
         <clipPath id="ddzArea">
            <rect x="12" y="0" width="1056" height="231" />
         </clipPath>
      </defs>
      <Frame h={230} />
      <ChartText x={14} y={42} w={97}>44.36</ChartText>
      <ChartText x={15} y={231} w={108}>-34.70</ChartText>
      <g fill="none" clipPath="url(#ddzArea)">
         <polyline points={toPoints(ddz, ddzY)} stroke="url(#heat)" strokeWidth="3.600" />
         <polyline points={toPoints(ddz, ddzY)} stroke="#262626" strokeWidth="2" strokeLinejoin="bevel" />
      </g>
   </svg>
);

const AxisBand = styled.div`
   width: 1056px;
   height: 85px;
   margin-left: 12px;
   flex: none;
   background: #f7f8fa;
`;

const ticks = Array.from({ length: 74 }, (_, n) => n + 14);

const DateAxis = () => (
   <AxisBand>
      <svg width="1056" height="85" viewBox="12 0 1056 85">
         {ticks.map((i) => {
            const major = i === 27 || i === 57 || i === 87;
            return (
               <path
                  key={i}
                  d={`M${dayX(i) + 0.5} 0.500 V${major ? 16 : 10}`}
                  stroke={major ? "#666" : "#999"}
                  strokeWidth={major ? 3.5 : 2}
                  opacity={Math.min((i - 13) / 6, 1)}
               />
            );
         })}
         <ChartText x={16.5} y={50.5} w={167} color={GREY}>20250422</ChartText>
         <ChartText x={256.5} y={50.5} w={171} color={GREY}>20250604</ChartText>
         <ChartText x={620} y={50.5} w={164} color={GREY}>20250716</ChartText>
         <ChartText x={896} y={50.5} w={166} color={GREY}>20250827</ChartText>
      </svg>
   </AxisBand>
);

/* ---------- banner and footer ---------- */

const Banner = styled.div`
   height: 90px;
   margin: 18px 18px 17px;
   padding: 0 37px 0 29px;
   display: flex;
   align-items: center;
   flex: none;
   border-radius: 45px;
   background: #fcede4;
`;

const Divider = styled.i`
   width: 1.5px;
   height: 36px;
   margin-left: auto;
   margin-right: 16px;
   background: ${ORANGE};
`;

const Gap = styled.div`
   height: 14px;
   flex: none;
   border-top: 2px solid #dcdcde;
   border-bottom: 2px solid #dcdcde;
`;

const Footer = styled.footer`
   flex: 1;
   display: flex;
   flex-direction: column;
   align-items: center;
   justify-content: space-between;
   padding-bottom: 3px;
   background: #f7f8fb;
`;

const FooterRow = styled.div`
   width: 100%;
   height: 140px;
   display: flex;
`;

const IndexBox = styled.div`
   width: 276px;
   padding-top: 9px;
   display: flex;
   flex-direction: column;
   align-items: center;
   gap: 7px;
`;

const IndexLine = styled.div`
   width: 228px;
   margin: -6px 0 0 31px;
   display: flex;
   align-items: center;
   justify-content: space-between;
`;

const TradeButton = styled.button`
   flex: none;
   width: 181px;
   height: 96px;
   margin: 19px 0 0 ${(p) => p.$gap}px;
   border: 0;
   border-radius: 18px;
   background: ${(p) => (p.$sell ? "linear-gradient(#3a75f8, #6b98ff)" : "linear-gradient(#f4504a, #eb7770)")};
   color: #fff;
   font: 500 44px/96px ${FONT};
   padding: 0;
`;

const Action = styled.div`
   flex: none;
   width: ${(p) => p.$w}px;
   padding-left: ${(p) => p.$left || 0}px;
   display: flex;
   flex-direction: column;
   align-items: center;
   color: ${GREY};
   font-size: 32.5px;
   line-height: 42px;
   white-space: nowrap;
`;

const ActionIcon = styled.div`
   height: 81px;
   padding-top: ${(p) => p.$top || 0}px;
   color: ${DARK};
   font-size: 54px;
   font-weight: 500;
   line-height: 84px;
`;

const HomeBar = styled.i`
   width: 432px;
   height: 7px;
   border-radius: 4px;
   background: #bcbdbf;
`;

const App = () => (
   <>
      <GlobalStyle />
      <Page>
         <StatusBar />
         <Header />
         <Quote />
         <Notice />
         <Tabs />
         <AverageRow />
         <PriceChart />
         <VolumeRow />
         <VolumeChart />
         <DdzRow />
         <DdzChart />
         <DateAxis />
         <Banner>
            <svg width="48" height="42" viewBox="0 0 48 42" fill="#ec5404">
               <path d="M1 12 H5 V29 H1Z M10 13 L41 3 V1 H46 V41 H41 V38 L29 34 L27 37 L17 34 L15 30 L10 29Z" />
            </svg>
            <Fit w={497} size={38.5} gap={53} color={ORANGE}>投资科创50怎么才能更省钱?</Fit>
            <Divider />
            <svg width="34" height="34" viewBox="0 0 34 34" stroke={ORANGE} strokeWidth="3">
               <path d="M1 1 L33 33 M33 1 L1 33" />
            </svg>
         </Banner>
         <Gap />
         <Footer>
            <FooterRow>
               <IndexBox>
                  <Caret $up $w={20} $h={8} $color="#777" />
                  <Fit w={149} size={39} color={RED}>2764.04</Fit>
                  <IndexLine>
                     <Fit w={73} size={35} color={GREY}>创业</Fit>
                     <Fit w={107} size={38} color={RED}>0.80%</Fit>
                  </IndexLine>
               </IndexBox>
               <TradeButton $gap={24}>买</TradeButton>
               <TradeButton $gap={15} $sell>卖</TradeButton>
               <Action $w={158}><ActionIcon>撤</ActionIcon>撤单</Action>
               <Action $w={104}>
                  <ActionIcon $top={12}>
                     <svg width="58" height="60" viewBox="0 0 58 60" fill="none" stroke={DARK} strokeWidth="4.500" strokeLinejoin="round">
                        <path d="M25 4 Q29 1.500 33 4 L51 14 Q54 16 54 20 V40 Q54 44 51 46 L33 56 Q29 58.500 25 56 L7 46 Q4 44 4 40 V20 Q4 16 7 14Z" />
                        <circle cx="29" cy="30" r="9" />
                     </svg>
                  </ActionIcon>
                  设自选
               </Action>
               <Action $w={141} $left={10}>
                  <ActionIcon $top={39}>
                     <svg width="48" height="12" viewBox="0 0 48 12" fill={DARK}>
                        <circle cx="6" cy="6" r="5" />
                        <circle cx="24" cy="6" r="5" />
                        <circle cx="42" cy="6" r="5" />
                     </svg>
                  </ActionIcon>
                  更多
               </Action>
            </FooterRow>
            <HomeBar />
         </Footer>
      </Page>
   </>
);

export default App;
